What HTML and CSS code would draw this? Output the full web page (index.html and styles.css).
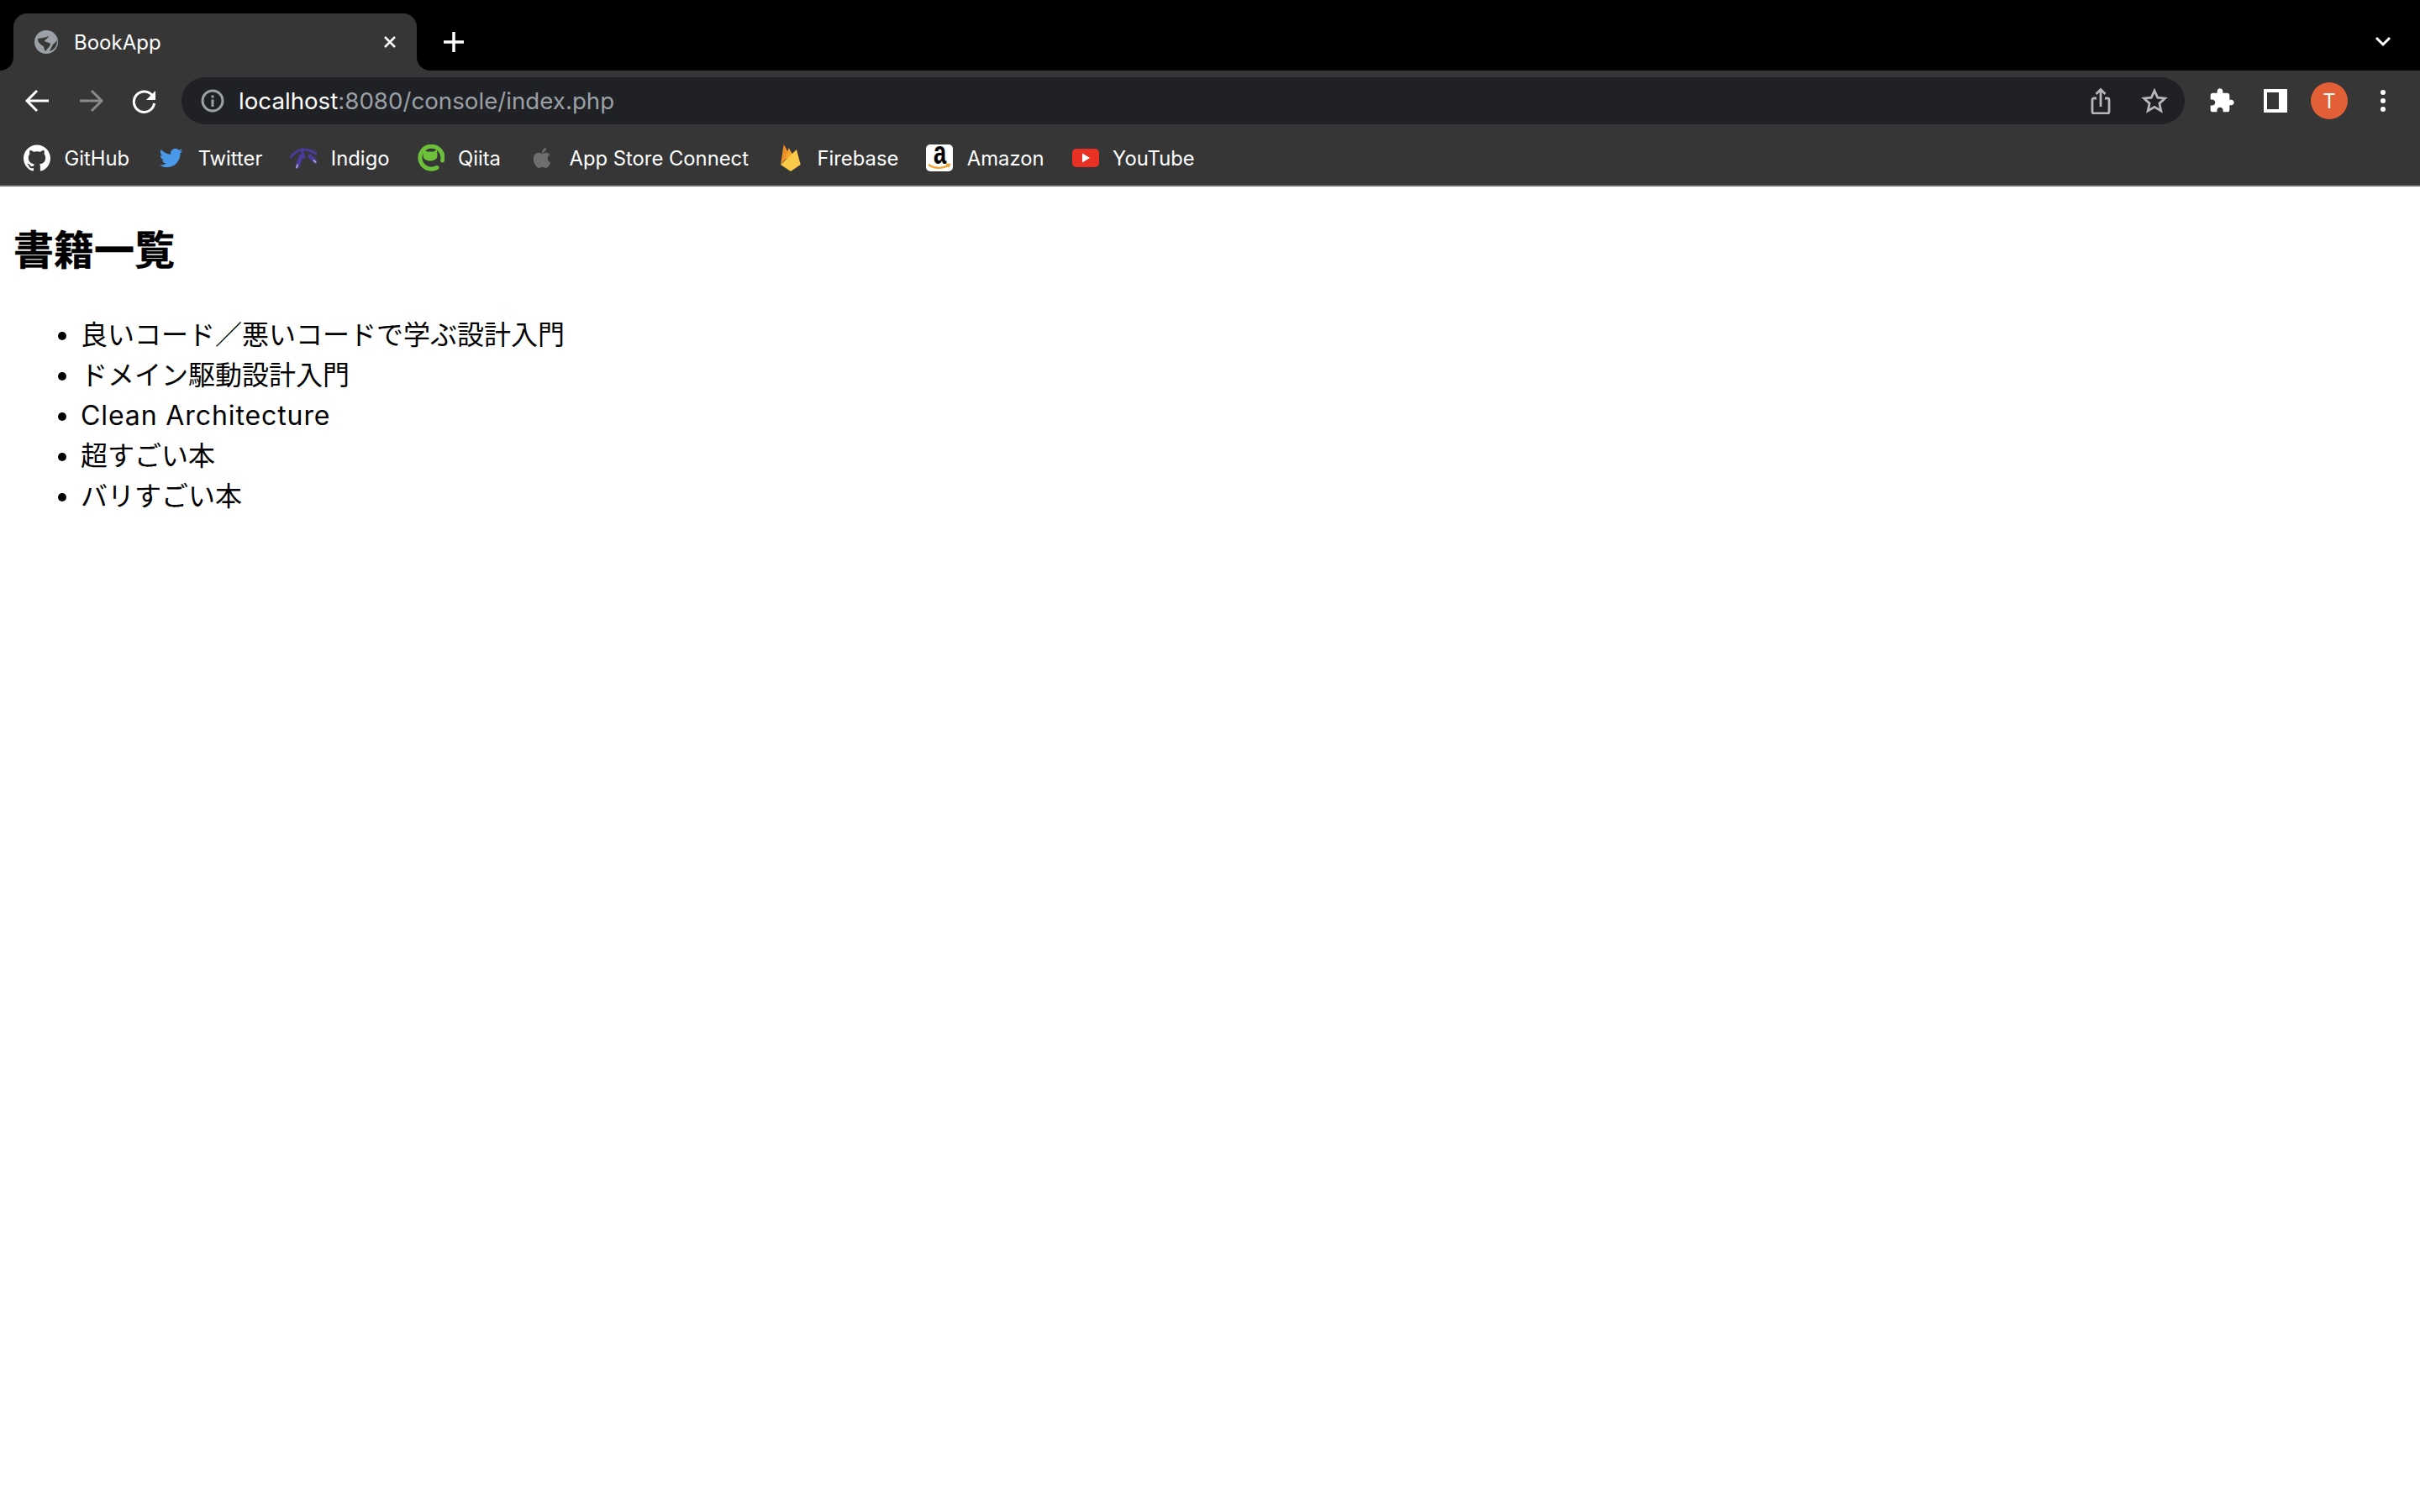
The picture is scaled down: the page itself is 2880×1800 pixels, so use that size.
FILE: index.html
```html
<!DOCTYPE html>
<html lang="ja">
<head>
<meta charset="utf-8">
<title>BookApp</title>
<link rel="stylesheet" href="styles.css">
</head>
<body>
<header class="browser">
  <div class="tabstrip">
    <div class="tab">
      <svg class="favicon" viewBox="0 0 28 28"><circle cx="14" cy="14" r="14" fill="#9aa0a6"/><path d="M4 10C8 9 13 9 17 7 16 10 12 11 12 13 14 15 19 14 19 17 18 20 15 22 13 25 11 22 12 19 9 18 6 16 4 14 4 10zM27 12C25 15 22 16 21 19 20 21 19 23 18 25 23 24 27 19 27 12z" fill="#363636"/></svg>
      <span class="tab-title">BookApp</span>
      <svg class="tab-close" viewBox="0 0 16 16"><path d="M2 2l12 12M14 2L2 14"/></svg>
    </div>
    <svg class="new-tab" viewBox="0 0 26 26"><path d="M13 1v24M1 13h24"/></svg>
    <div class="spacer"></div>
    <svg class="tab-list" viewBox="0 0 32 32"><path d="M8 11l8 8 8-8"/></svg>
  </div>
  <div class="toolbar">
    <div class="nav-row">
      <svg class="ico stroke-w" viewBox="0 0 32 32"><path d="M30 16H5M16 4L4 16l12 12"/></svg>
      <svg class="ico stroke-g" viewBox="0 0 32 32"><path d="M3 16h25M17 4l12 12-12 12"/></svg>
      <svg class="ico" viewBox="0 0 32 32"><path class="reload-arc" d="M26 11a12.200 12.200 0 1 0 1.600 8"/><path class="fill-w" d="M29 4v11H18z"/></svg>
      <div class="omnibox">
        <svg class="info" viewBox="0 0 28 28"><circle cx="14" cy="14" r="12" /><path d="M14 12.500V21M14 7.500v3"/></svg>
        <span class="url"><span class="host">localhost</span>:8080/console/index.php</span>
        <div class="spacer"></div>
        <svg class="ico stroke-l" viewBox="0 0 32 32"><path d="M11 13H8a2 2 0 0 0-2 2v14a2 2 0 0 0 2 2h16a2 2 0 0 0 2-2V15a2 2 0 0 0-2-2h-3M16 23V3M10.500 8L16 2.500 21.500 8"/></svg>
        <svg class="ico stroke-l" viewBox="0 0 32 32"><path d="M16 4l3.700 8.200 8.800.900-6.600 6 1.900 8.800-7.800-4.500-7.800 4.500 1.900-8.800-6.600-6 8.800-.900z"/></svg>
      </div>
      <svg class="ico" viewBox="0 0 24 24"><path class="fill-w" d="M20.500 11H19V7c0-1.100-.9-2-2-2h-4V3.500C13 2.120 11.880 1 10.500 1S8 2.120 8 3.500V5H4c-1.100 0-1.990.9-1.990 2v3.800H3.500c1.490 0 2.700 1.210 2.700 2.700s-1.210 2.700-2.700 2.700H2V20c0 1.100.9 2 2 2h3.800v-1.500c0-1.490 1.210-2.700 2.700-2.700 1.490 0 2.700 1.210 2.700 2.700V22H17c1.100 0 2-.9 2-2v-4h1.500c1.380 0 2.500-1.120 2.500-2.500S21.880 11 20.500 11z"/></svg>
      <svg class="ico" viewBox="0 0 32 32"><path class="fill-w" fill-rule="evenodd" d="M2 2h28v28H2zM6 6v20h14V6z"/></svg>
      <div class="avatar">T</div>
      <svg class="ico" viewBox="0 0 32 32"><circle class="fill-w" cx="16" cy="6" r="3"/><circle class="fill-w" cx="16" cy="16" r="3"/><circle class="fill-w" cx="16" cy="26" r="3"/></svg>
    </div>
    <nav class="bookmarks">
      <a class="bm"><svg class="ico" viewBox="0 0 24 24"><path class="fill-w" d="M12 .297c-6.630 0-12 5.373-12 12 0 5.303 3.438 9.800 8.205 11.385.6.113.82-.258.82-.577 0-.285-.01-1.040-.015-2.040-3.338.724-4.042-1.610-4.042-1.610C4.422 18.070 3.633 17.700 3.633 17.700c-1.087-.744.084-.729.084-.729 1.205.084 1.838 1.236 1.838 1.236 1.070 1.835 2.809 1.305 3.495.998.108-.776.417-1.305.76-1.605-2.665-.3-5.466-1.332-5.466-5.930 0-1.310.465-2.380 1.235-3.220-.135-.303-.54-1.523.105-3.176 0 0 1.005-.322 3.300 1.230.96-.267 1.980-.399 3-.405 1.020.006 2.040.138 3 .405 2.280-1.552 3.285-1.230 3.285-1.230.645 1.653.24 2.873.12 3.176.765.84 1.230 1.910 1.230 3.220 0 4.610-2.805 5.625-5.475 5.920.42.36.81 1.096.81 2.220 0 1.606-.015 2.896-.015 3.286 0 .315.21.69.825.57C20.565 22.092 24 17.592 24 12.297c0-6.627-5.373-12-12-12"/></svg>GitHub</a>
      <a class="bm"><svg class="ico" viewBox="-2.500 -2 28 28"><path fill="#4a99e9" d="M23.953 4.570a10 10 0 0 1-2.825.775 4.958 4.958 0 0 0 2.163-2.723c-.951.555-2.005.959-3.127 1.184a4.920 4.920 0 0 0-8.384 4.482C7.690 8.095 4.067 6.130 1.640 3.162a4.822 4.822 0 0 0-.666 2.475c0 1.710.87 3.213 2.188 4.096a4.904 4.904 0 0 1-2.228-.616v.06a4.923 4.923 0 0 0 3.946 4.827 4.996 4.996 0 0 1-2.212.085 4.936 4.936 0 0 0 4.604 3.417 9.867 9.867 0 0 1-6.102 2.105c-.39 0-.779-.023-1.170-.067a13.995 13.995 0 0 0 7.557 2.209c9.053 0 13.998-7.496 13.998-13.985 0-.21 0-.42-.015-.63A9.935 9.935 0 0 0 24 4.590z"/></svg>Twitter</a>
      <a class="bm"><svg class="ico" viewBox="0 0 32 32"><g class="indigo"><path d="M15 6C10 7 5 10 1 15M15 6c5 0 11 1 16 5M14 6c1 3 2 6 3 10"/><path class="indigo-thick" d="M13 14c-1 5-3 8-4 12M24 14c2 2 4 4 6 6"/><path class="indigo-soft" d="M8 27.500l1-3M30.500 21l-2-2"/></g></svg>Indigo</a>
      <a class="bm"><svg class="ico" viewBox="0 0 32 32"><path class="qiita-ring" d="M29.500 19A13.500 13.500 0 1 0 23 27.500"/><path class="qiita" d="M7 6l4 2.500h8L23 6l.5 7.500c0 3.500-3.500 6-8.500 6s-8.500-2.500-8.500-6z"/></svg>Qiita</a>
      <a class="bm"><svg class="ico" viewBox="0 0 24 24"><path class="apple" d="M17.050 20.280c-.98.95-2.050.8-3.080.35-1.090-.46-2.090-.48-3.240 0-1.440.62-2.200.44-3.060-.35C2.790 15.250 3.510 7.590 9.050 7.310c1.350.07 2.290.74 3.080.8 1.180-.24 2.310-.93 3.570-.84 1.510.12 2.650.72 3.400 1.800-3.120 1.870-2.380 5.980.48 7.130-.57 1.500-1.310 2.990-2.540 4.090zM12.030 7.250c-.15-2.230 1.660-4.070 3.740-4.250.29 2.580-2.340 4.500-3.740 4.250z"/></svg>App Store Connect</a>
      <a class="bm"><svg class="ico" viewBox="0 0 32 32"><path fill="#ee8f2b" d="M5 24L8.700 0l7 12z"/><path fill="#f6a52a" d="M10 18L14.700 4l5.300 9z"/><path fill="#fcca4a" d="M5 24L24 6l4.700 18L17 32z"/></svg>Firebase</a>
      <a class="bm"><span class="amazon"><span class="amazon-a">a</span><svg class="amazon-smile" viewBox="0 0 32 32"><path d="M3 24c7 5 17 5 24 .5M24 23.500l4 .5-1.500 3"/></svg></span>Amazon</a>
      <a class="bm"><svg class="ico" viewBox="0 0 32 32"><rect y="5" width="32" height="22" rx="5" fill="#e93223"/><path d="M12 10.500v11l9-5.500z" fill="#fff"/></svg>YouTube</a>
    </nav>
  </div>
</header>
<main class="page">
  <h1>書籍一覧</h1>
  <ul>
    <li>良いコード／悪いコードで学ぶ設計入門</li>
    <li>ドメイン駆動設計入門</li>
    <li class="latin">Clean Architecture</li>
    <li>超すごい本</li>
    <li>バリすごい本</li>
  </ul>
</main>
</body>
</html>
```
FILE: styles.css
```css
* { box-sizing: border-box; }
html, body { margin: 0; height: 100%; }
body {
  background: #fff;
  color: #000;
  font-family: "Inter", "Noto Sans CJK JP", sans-serif;
}
.spacer { flex: 1; }
.browser { display: flex; flex-direction: column; font-family: "Inter", sans-serif; color: #fff; }

.tabstrip {
  height: 84px;
  background: #000;
  display: flex;
  align-items: flex-end;
  padding: 0 28px 0 16px;
}
.tab {
  position: relative;
  width: 480px;
  height: 68px;
  background: #363636;
  border-radius: 16px 16px 0 0;
  display: flex;
  align-items: center;
  padding: 0 24px 0 25px;
  font-size: 24px;
}
.tab::before, .tab::after {
  content: "";
  position: absolute;
  bottom: 0;
  width: 16px;
  height: 16px;
}
.tab::before { left: -16px; background: radial-gradient(circle at 0 0, #000 15.500px, #363636 16.500px); }
.tab::after { right: -16px; background: radial-gradient(circle at 100% 0, #000 15.500px, #363636 16.500px); }
.favicon { width: 28px; height: 28px; flex: none; }
.tab-title { margin-left: 19px; flex: 1; }
.tab-close { width: 16px; height: 16px; flex: none; fill: none; stroke: #fff; stroke-width: 2.500; }
.new-tab { width: 26px; height: 26px; margin: 0 0 21px 31px; fill: none; stroke: #fff; stroke-width: 3.500; }
.tab-list { width: 32px; height: 32px; margin-bottom: 18px; fill: none; stroke: #fff; stroke-width: 3; }

.toolbar { background: #363636; border-bottom: 2px solid #666; padding: 8px 28px 16px; height: 138px; }
.nav-row { display: flex; align-items: center; gap: 32px; height: 56px; }
.ico { width: 32px; height: 32px; flex: none; }
.stroke-w, .stroke-g, .stroke-l, .reload-arc { fill: none; stroke-width: 3; }
.stroke-w { stroke: #fff; }
.stroke-g { stroke: #8a8a8a; }
.stroke-l { stroke: #b4b6b8; stroke-width: 2.800; }
.reload-arc { stroke: #fff; }
.fill-w { fill: #fff; }

.omnibox {
  flex: 1;
  height: 56px;
  margin: 0 -4px;
  background: #202124;
  border-radius: 28px;
  display: flex;
  align-items: center;
  gap: 32px;
  padding: 0 20px 0 23px;
}
.info { width: 28px; height: 28px; margin-right: -15px; flex: none; fill: none; stroke: #9aa0a6; stroke-width: 3; }
.url { font-size: 27.700px; color: #9aa0a6; }
.host { color: #fff; }
.omnibox .spacer { margin-right: -32px; }
.avatar {
  width: 44px;
  height: 44px;
  margin: 0 -6px;
  flex: none;
  border-radius: 50%;
  background: #e35f35;
  color: #fff;
  font-size: 24px;
  display: flex;
  align-items: center;
  justify-content: center;
}

.bookmarks { display: flex; align-items: center; gap: 33px; height: 32px; margin-top: 24px; font-size: 23.800px; }
.bm { display: flex; align-items: center; gap: 16.500px; }
.indigo { fill: none; stroke: #4d3b9c; stroke-width: 3; stroke-linecap: round; }
.indigo-thick { stroke-width: 5; }
.indigo-soft { stroke: #a7a3c4; stroke-width: 2; }
.qiita-ring { fill: none; stroke: #6cc03a; stroke-width: 5; stroke-linecap: round; }
.qiita { fill: #6cc03a; }
.apple { fill: #6e6e6e; }
.amazon {
  position: relative;
  width: 32px;
  height: 32px;
  flex: none;
  background: #fff;
  border-radius: 5px;
  display: flex;
  justify-content: center;
}
.amazon-a {
  display: block;
  font-family: "Liberation Sans", sans-serif;
  font-weight: 700;
  font-size: 38px;
  line-height: 32px;
  color: #000;
  transform: translateY(-6px) scaleX(0.72);
}
.amazon-smile { position: absolute; left: 0; top: 0; width: 32px; height: 32px; fill: none; stroke: #f0a433; stroke-width: 2.200; }

.page { padding: 32px 16px 0; }
h1 { margin: 0 0 34px; font-size: 48px; line-height: 87px; font-weight: 700; -webkit-text-stroke: 0.400px #000; }
ul { margin: 0; padding: 0 0 0 80px; font-size: 32px; line-height: 48px; }
.latin { letter-spacing: 0.900px; }
```
